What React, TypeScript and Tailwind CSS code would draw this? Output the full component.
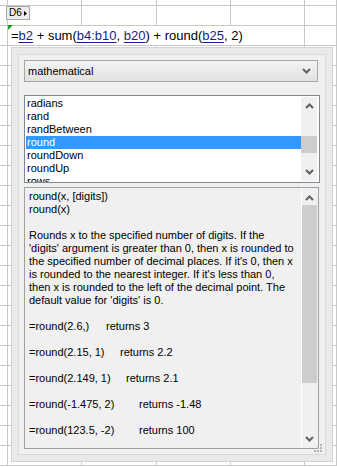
import React from 'react';

const COLS = ['w-[8px]', 'w-[74px]', 'w-[75px]', 'w-[74px]', 'w-[74px]', 'flex-1'];
const ROWS = Array.from({ length: 24 }, (_, i) => (i === 0 ? 'h-[6px]' : 'h-[20px]'));

const FUNCS = ['radians', 'rand', 'randBetween', 'round', 'roundDown', 'roundUp', 'rows'];

const DESC = [
    'Rounds x to the specified number of digits. If the',
    "'digits' argument is greater than 0, then x is rounded to",
    "the specified number of decimal places. If it's 0, then x",
    "is rounded to the nearest integer. If it's less than 0,",
    'then x is rounded to the left of the decimal point. The',
    "default value for 'digits' is 0.",
];

const EXAMPLES = [
    { call: '=round(2.6,)', result: 'returns 3', w: 'w-[77px]' },
    { call: '=round(2.15, 1)', result: 'returns 2.2', w: 'w-[91px]' },
    { call: '=round(2.149, 1)', result: 'returns 2.1', w: 'w-[97px]' },
    { call: '=round(-1.475, 2)', result: 'returns -1.48', w: 'w-[110px]' },
    { call: '=round(123.5, -2)', result: 'returns 100', w: 'w-[110px]' },
];

function Chevron({ up = false }: { up?: boolean }) {
    return (
        <svg width="9" height="6" viewBox="0 0 9 6" className="block">
            <polyline
                points={up ? '1,5 4.5,1.5 8,5' : '1,1 4.5,4.5 8,1'}
                fill="none"
                stroke="#606060"
                strokeWidth="2"
            />
        </svg>
    );
}

function Grid() {
    return (
        <div className="flex flex-col">
            {ROWS.map((h, r) => (
                <div key={r} className={`flex ${h}`}>
                    {COLS.map((w, c) => (
                        <div key={c} className={`${w} shrink-0 border-r border-b border-[#c8c8c8]`} />
                    ))}
                </div>
            ))}
        </div>
    );
}

function Ref({ children }: { children: React.ReactNode }) {
    return <span className="text-[#1c1c8a] underline underline-offset-2">{children}</span>;
}

export default function App() {
    return (
        <div
            className="relative w-[337px] h-[467px] overflow-hidden bg-white text-black"
            style={{ fontFamily: '"Liberation Sans", Arial, sans-serif' }}
        >
            <Grid />

            {/* cell name tag */}
            <div className="absolute left-[6px] top-[6px] w-[24px] h-[14px] flex items-center pl-[2px] gap-[2px] bg-[#ececec] border border-[#a8a8a8] text-[10px] leading-none">
                <span>D6</span>
                <svg width="3" height="5" viewBox="0 0 3 5">
                    <polygon points="0,0 3,2.5 0,5" fill="#000" />
                </svg>
            </div>

            {/* formula editor */}
            <div className="absolute left-[8px] top-[26px] h-[19px] w-[223px] bg-white flex items-center pl-[3px] whitespace-pre text-[13px] overflow-visible">
                <svg width="5" height="5" viewBox="0 0 5 5" className="absolute left-0 top-[-1px]">
                    <polygon points="0,0 5,0 0,5" fill="#1e9e1e" />
                </svg>
                <span>
                    =<Ref>b2</Ref> + sum(<Ref>b4:b10</Ref>, <Ref>b20</Ref>) + round(<Ref>b25</Ref>, 2)
                </span>
            </div>

            {/* function helper popup */}
            <div className="absolute left-[11px] top-[47px] w-[322px] h-[415px] bg-[#eaeaea] border border-[#d3d3d3] p-[6px]">
                <div className="relative w-full h-full bg-[#f0f0f0] border border-[#dadada] pt-[5px] pl-[5px] flex flex-col text-[11px]">
                    <div className="w-[294px] h-[22px] border border-[#a6a6a6] bg-gradient-to-b from-[#f3f3f3] to-[#e2e2e2] flex items-center justify-between pl-[3px] pr-[6px]">
                        <span>mathematical</span>
                        <Chevron />
                    </div>

                    <div className="mt-[13px] w-[296px] h-[88px] border border-[#828790] bg-white flex overflow-hidden">
                        <div className="flex-1 pt-[1px] pl-[1px] leading-[13px]">
                            {FUNCS.map(f => (
                                <div
                                    key={f}
                                    className={`h-[13px] pl-[1px] ${f === 'round' ? 'bg-[#3399ff] text-white' : ''}`}
                                >
                                    {f}
                                </div>
                            ))}
                        </div>
                        <div className="w-[16px] mr-[2px] my-[1px] bg-[#f0f0f0] flex flex-col items-center justify-between py-[6px] relative">
                            <Chevron up />
                            <div className="absolute left-0 right-0 top-[39px] h-[17px] bg-[#cdcdcd]" />
                            <Chevron />
                        </div>
                    </div>

                    <div className="mt-[4px] w-[295px] h-[262px] border border-[#a0a0a0] bg-[#f0f0f0] flex">
                        <div className="flex-1 pl-[4px] pt-[2px] leading-[13px] whitespace-pre">
                            <div>round(x, [digits])</div>
                            <div>round(x)</div>
                            <div className="h-[13px]" />
                            {DESC.map(l => (
                                <div key={l}>{l}</div>
                            ))}
                            {EXAMPLES.map(e => (
                                <div key={e.call} className="mt-[13px] flex">
                                    <span className={`${e.w} shrink-0`}>{e.call}</span>
                                    <span>{e.result}</span>
                                </div>
                            ))}
                        </div>
                        <div className="w-[16px] mr-[1px] border-l border-white flex flex-col items-center justify-between pt-[7px] pb-[6px] relative">
                            <Chevron up />
                            <div className="absolute left-0 right-0 top-[17px] h-[178px] bg-[#cdcdcd]" />
                            <Chevron />
                        </div>
                    </div>

                    {/* size grip */}
                    <svg width="10" height="10" viewBox="0 0 10 10" className="absolute right-[2px] bottom-[1px]">
                        <rect x="7" y="1" width="2" height="2" fill="#b4b4b4" />
                        <rect x="4" y="4" width="2" height="2" fill="#b4b4b4" />
                        <rect x="7" y="4" width="2" height="2" fill="#b4b4b4" />
                        <rect x="1" y="7" width="2" height="2" fill="#b4b4b4" />
                        <rect x="4" y="7" width="2" height="2" fill="#b4b4b4" />
                        <rect x="7" y="7" width="2" height="2" fill="#b4b4b4" />
                    </svg>
                </div>
            </div>
        </div>
    );
}
